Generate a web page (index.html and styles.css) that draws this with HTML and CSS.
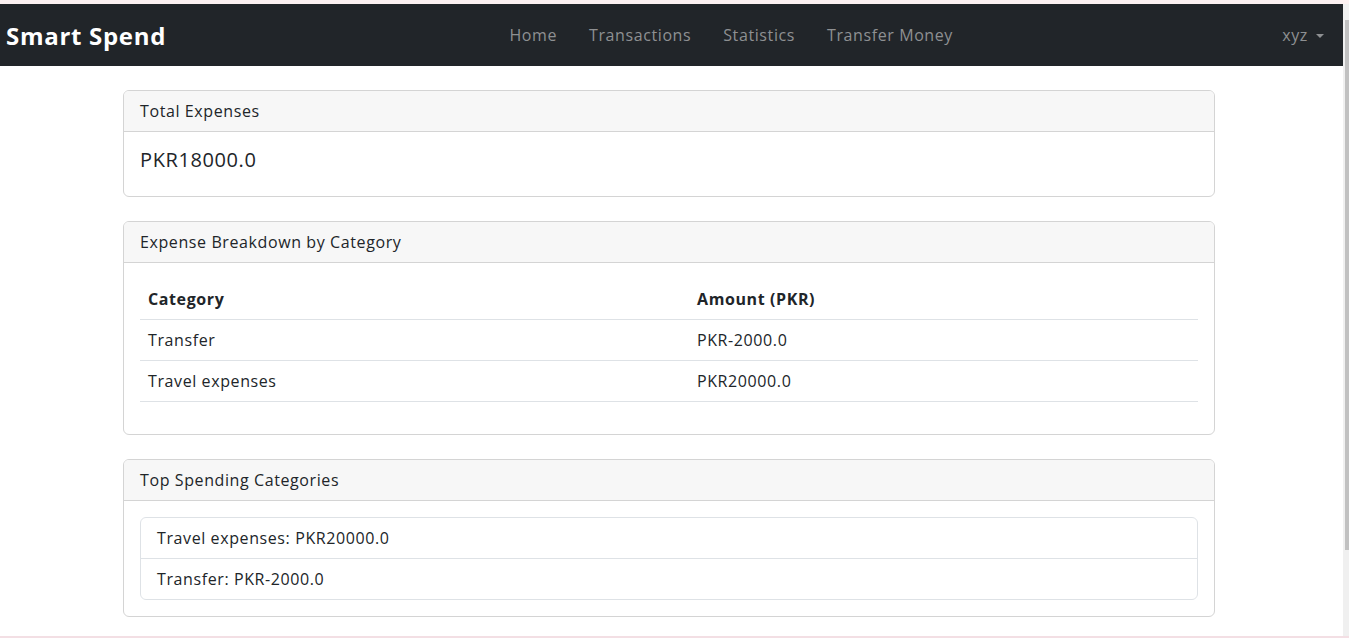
FILE: index.html
```html
<!DOCTYPE html>
<html lang="en">
<head>
<meta charset="utf-8">
<title>Smart Spend - Statistics</title>
<link rel="stylesheet" href="styles.css">
</head>
<body>
<div class="top-edge"></div>
<div class="viewport">
  <div class="page">
    <nav class="navbar">
      <a class="brand" href="#">Smart Spend</a>
      <ul class="nav-links">
        <li><a href="#">Home</a></li>
        <li><a href="#">Transactions</a></li>
        <li><a href="#">Statistics</a></li>
        <li><a href="#">Transfer Money</a></li>
      </ul>
      <a class="user" href="#">xyz <span class="caret"></span></a>
    </nav>
    <main class="container">
      <section class="card">
        <div class="card-header">Total Expenses</div>
        <div class="card-body">
          <h5 class="total">PKR18000.0</h5>
        </div>
      </section>
      <section class="card">
        <div class="card-header">Expense Breakdown by Category</div>
        <div class="card-body">
          <table class="table">
            <thead>
              <tr><th class="col-cat">Category</th><th>Amount (PKR)</th></tr>
            </thead>
            <tbody>
              <tr><td>Transfer</td><td>PKR-2000.0</td></tr>
              <tr><td>Travel expenses</td><td>PKR20000.0</td></tr>
            </tbody>
          </table>
        </div>
      </section>
      <section class="card">
        <div class="card-header">Top Spending Categories</div>
        <div class="card-body">
          <ul class="list-group">
            <li>Travel expenses: PKR20000.0</li>
            <li>Transfer: PKR-2000.0</li>
          </ul>
        </div>
      </section>
    </main>
  </div>
  <div class="scrollbar"><div class="thumb"></div></div>
</div>
<div class="bottom-edge"></div>
</body>
</html>
```
FILE: styles.css
```css
* { box-sizing: border-box; }
html, body { margin: 0; padding: 0; }
body {
  font-family: "Open Sans", "DejaVu Sans", sans-serif;
  font-size: 16px;
  letter-spacing: 0.6px;
  color: #212529;
  background: #fff;
  height: 638px;
  overflow: hidden;
  display: flex;
  flex-direction: column;
}
.top-edge { height: 4px; background: #fcf1f1; flex: none; }
.bottom-edge { height: 2px; background: #f3dfe4; flex: none; }
.viewport { flex: 1; display: flex; min-height: 0; }
.page { flex: 1; min-width: 0; overflow: hidden; }
.scrollbar {
  width: 6px;
  flex: none;
  background: #f0f0f0;
  padding: 16px 0 86px 2px;
  display: flex;
}
.thumb { flex: 1; background: #c1c1c1; }

.navbar {
  height: 62px;
  background: #212529;
  display: flex;
  align-items: center;
  padding: 0 19px 0 6px;
}
.brand {
  color: #fff;
  font-weight: 700;
  font-size: 24px;
  text-decoration: none;
  letter-spacing: 0.7px;
}
.nav-links {
  list-style: none;
  margin: 0 auto;
  padding: 0 0 0 14px;
  display: flex;
  gap: 32px;
}
.nav-links a, .user {
  color: #8e9092;
  text-decoration: none;
  font-size: 16px;
}
.user { display: flex; align-items: center; gap: 8px; }
.caret {
  width: 0; height: 0;
  border-left: 4px solid transparent;
  border-right: 4px solid transparent;
  border-top: 4px solid #8e9092;
  margin-top: 1px;
}

.container {
  width: 1092px;
  margin: 24px 0 0 123px;
  display: flex;
  flex-direction: column;
  gap: 24px;
}
.card {
  border: 1px solid #d4d4d4;
  border-radius: 6px;
  overflow: hidden;
}
.card-header {
  background: #f7f7f7;
  border-bottom: 1px solid #d4d4d4;
  padding: 0 16px;
  height: 41px;
  display: flex;
  align-items: center;
}
.card-body { padding: 16px; }
.total {
  margin: 0;
  font-size: 20px;
  font-weight: 500;
  line-height: 24px;
  padding-bottom: 8px;
}

.table {
  width: 100%;
  border-collapse: collapse;
  margin-bottom: 16px;
}
.table th, .table td {
  text-align: left;
  padding: 0 8px;
  height: 41px;
  border-bottom: 1px solid #dee2e6;
}
.table .col-cat { width: 549px; }
.table th { font-weight: 700; height: 40px; }

.list-group {
  list-style: none;
  margin: 0;
  padding: 0;
  border: 1px solid #dee2e6;
  border-radius: 6px;
}
.list-group li {
  height: 40px;
  padding: 0 16px;
  display: flex;
  align-items: center;
}
.list-group li + li { border-top: 1px solid #dee2e6; height: 41px; }
```
